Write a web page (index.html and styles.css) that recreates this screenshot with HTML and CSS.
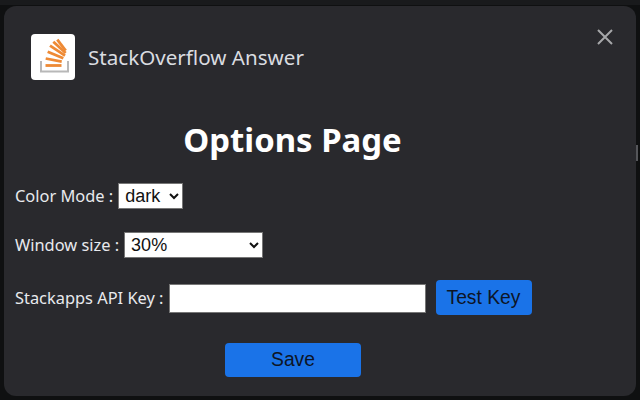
FILE: index.html
```html
<!DOCTYPE html>
<html lang="en">
<head>
    <meta charset="UTF-8">
    <title>StackOverflow Answer</title>
    <link rel="stylesheet" href="styles.css">
</head>
<body>
    <div class="page-behind">
        <span class="scroll-thumb"></span>
    </div>
    <div class="dialog">
        <div class="header">
            <div class="logo">
                <svg viewBox="0 0 44 46" width="44" height="46" fill="none">
                    <path d="M10 27v10.5h27V27" stroke="#b8b8b8" stroke-width="2"/>
                    <g stroke="#ee8a35" stroke-width="2.8">
                        <path d="M14.5 31.5h16"/>
                        <path d="M14.7 24.5l16 3.2"/>
                        <path d="M16.7 17.7l15.6 6.6"/>
                        <path d="M19 11.7l15 10"/>
                        <path d="M22.3 7.7l12.4 11.3"/>
                        <path d="M26.3 5.7l8.4 11"/>
                    </g>
                </svg>
            </div>
            <span class="app-name">StackOverflow Answer</span>
            <button class="close-button">
                <svg viewBox="0 0 16 16" width="16" height="16" fill="none" stroke="#a6a7a9" stroke-width="2">
                    <path d="M1 1l14 14M15 1L1 15"/>
                </svg>
            </button>
        </div>

        <h1 class="title">Options Page</h1>

        <div class="field">
            <label>Color Mode :</label>
            <select class="mode-select">
                <option>dark</option>
                <option>light</option>
            </select>
        </div>

        <div class="field">
            <label>Window size :</label>
            <select class="size-select">
                <option>30%</option>
                <option>50%</option>
                <option>100%</option>
            </select>
        </div>

        <div class="field key-field">
            <label>Stackapps API Key :</label>
            <input type="text" class="key-input">
            <button class="blue-button test-button">Test Key</button>
        </div>

        <div class="actions">
            <button class="blue-button save-button">Save</button>
        </div>
    </div>
</body>
</html>
```

FILE: styles.css
```css
* {
    margin: 0;
    padding: 0;
    box-sizing: border-box;
}

html,
body {
    height: 100%;
    overflow: hidden;
}

body {
    font-family: "Noto Sans", sans-serif;
    background-color: #0f1011;
    padding: 6px 4px 4px 4px;
}

.page-behind {
    position: absolute;
    top: 0;
    left: 0;
    width: 640px;
    height: 400px;
    border-top: 5px solid #191a1c;
}

.scroll-thumb {
    position: absolute;
    left: 636px;
    top: 140px;
    width: 2px;
    height: 16px;
    background-color: #55565a;
}

.dialog {
    position: relative;
    height: 390px;
    background-color: #29292d;
    border-radius: 12px;
    color: #e8eaed;
    padding: 28px 11px 0 11px;
}

.header {
    display: flex;
    align-items: center;
    padding-left: 16px;
    position: relative;
}

.logo {
    width: 44px;
    height: 46px;
    background: white;
    border-radius: 4px;
    display: flex;
}

.app-name {
    margin-left: 13px;
    font-size: 20.6px;
    color: #dadce0;
}

.close-button {
    position: absolute;
    right: 12px;
    top: -5px;
    width: 16px;
    height: 16px;
    background: none;
    border: none;
    display: flex;
}

.title {
    font-size: 32.9px;
    line-height: 44px;
    font-weight: 700;
    color: #fff;
    text-align: center;
    margin-top: 38px;
    margin-right: 55px;
}

.field {
    display: flex;
    align-items: center;
    gap: 5px;
    font-size: 16.4px;
    color: #e8eaed;
    height: 26px;
    margin-top: 23px;
}

.field label {
    margin-bottom: 2px;
}

.title + .field {
    margin-top: 21px;
}

select {
    font-family: "Liberation Sans", sans-serif;
    font-size: 18px;
    color: #111;
    background-color: #fff;
    border: 1px solid #767676;
    border-radius: 0;
    height: 26px;
    padding-left: 2px;
}

.mode-select {
    width: 65px;
}

.size-select {
    width: 139px;
}

.key-field {
    margin-top: 27px;
}

.key-input {
    width: 257px;
    height: 29px;
    margin-left: 1px;
    background: #fff;
    border: 1px solid #767676;
}

.blue-button {
    font-family: "Liberation Sans", sans-serif;
    font-size: 19.3px;
    color: #0d1526;
    background-color: #1a73e8;
    border: none;
    border-radius: 4px;
}

.test-button {
    width: 96px;
    height: 35px;
    margin-left: 5px;
    margin-bottom: 2px;
    padding-top: 2px;
    padding-right: 2px;
}

.actions {
    display: flex;
    justify-content: center;
    margin-top: 32px;
    margin-right: 54px;
}

.save-button {
    width: 136px;
    height: 34px;
}
```
